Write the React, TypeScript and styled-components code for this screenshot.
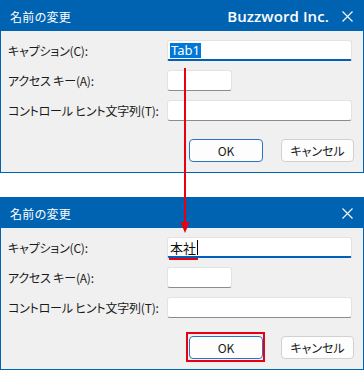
import React from "react";
import styled, { createGlobalStyle, css } from "styled-components";

const BLUE = "#0063b1";

const GlobalStyle = createGlobalStyle`
    body {
        margin: 0;
        background: #ffffff;
        font-family: "Noto Sans CJK JP", "Noto Sans", sans-serif;
        font-feature-settings: "palt";
    }
`;

const Page = styled.div`
    position: relative;
    width: 364px;
    height: 370px;
    display: flex;
    flex-direction: column;
    gap: 24px;
`;

const Dialog = styled.section`
    box-sizing: border-box;
    height: 173px;
    border: 1px solid ${BLUE};
    background: #f0f0f0;
    display: flex;
    flex-direction: column;
`;

const TitleBar = styled.header`
    height: 30px;
    flex: none;
    background: ${BLUE};
    color: #ffffff;
    display: flex;
    align-items: center;
    padding: 0 10px 0 9px;
    font-size: 12px;
`;

const Title = styled.span`
    flex: 1;
    letter-spacing: 0.3px;
`;

const Brand = styled.span`
    font-family: "Open Sans", "Noto Sans", sans-serif;
    font-size: 15px;
    font-weight: 600;
    margin-right: 13px;
    letter-spacing: 0.1px;
`;

const Form = styled.div`
    display: grid;
    grid-template-columns: 159px 185px;
    grid-auto-rows: 21px;
    row-gap: 9px;
    align-items: center;
    padding: 9px 11px 0 7px;
`;

const Label = styled.label`
    font-size: 12px;
    color: #1a1a1a;
    white-space: nowrap;
    letter-spacing: -0.2px;
`;

const Field = styled.div<{ $short?: boolean; $focused?: boolean }>`
    position: relative;
    box-sizing: border-box;
    height: 21px;
    width: ${p => (p.$short ? "65px" : "185px")};
    background: #ffffff;
    border: 1px solid #e3e3e3;
    border-bottom-color: #8c8c8c;
    border-radius: 3px;
    display: flex;
    align-items: center;
    padding-left: 2px;
    font-size: 13px;
    color: #111111;
    ${p => p.$focused && css`
        border-bottom: 2px solid #005fb8;
        border-radius: 3px 3px 2px 2px;
    `}
`;

const Selected = styled.span`
    background: #0078d7;
    color: #ffffff;
    line-height: 15px;
    padding: 0 1px;
    font-family: "Noto Sans", sans-serif;
`;

const Caret = styled.span`
    display: inline-block;
    width: 1px;
    height: 15px;
    background: #000000;
    margin-left: 1px;
`;

const Underline = styled.span`
    position: absolute;
    left: 1px;
    top: calc(100% + 2px);
    width: 29px;
    height: 2px;
    background: #e60012;
`;

const ButtonRow = styled.div`
    display: flex;
    justify-content: flex-end;
    gap: 18px;
    margin-top: 18px;
    padding-right: 9px;
`;

const Button = styled.button<{ $primary?: boolean; $marked?: boolean; $width: number }>`
    position: relative;
    box-sizing: border-box;
    width: ${p => p.$width}px;
    height: 23px;
    background: #fdfdfd;
    border: 1px solid ${p => (p.$primary ? "#2b74c4" : "#d1d1d1")};
    border-radius: 4px;
    font-family: "Noto Sans CJK JP", "Noto Sans", sans-serif;
    font-feature-settings: "palt";
    font-size: 12px;
    color: #1a1a1a;
    padding: 0;
    ${p => p.$marked && css`
        &::after {
            content: "";
            position: absolute;
            left: -4px;
            right: -3px;
            top: -5px;
            bottom: -4px;
            border: 2px solid #e60012;
        }
    `}
`;

const Overlay = styled.svg`
    position: absolute;
    left: 0;
    top: 0;
    pointer-events: none;
`;

function CloseIcon() {
    return (
        <svg width="11" height="11" viewBox="0 0 11 11">
            <path d="M0.5 0.5 L10.5 10.5 M10.5 0.5 L0.5 10.5" stroke="#ffffff" strokeWidth="1.1" fill="none" />
        </svg>
    );
}

function RenameDialog({ brand, after }: { brand?: boolean; after?: boolean }) {
    return (
        <Dialog>
            <TitleBar>
                <Title>名前の変更</Title>
                {brand && <Brand>Buzzword Inc.</Brand>}
                <CloseIcon />
            </TitleBar>
            <Form>
                <Label>キャプション(C):</Label>
                <Field $focused>
                    {after ? (
                        <>
                            本社<Caret />
                            <Underline />
                        </>
                    ) : (
                        <Selected>Tab1</Selected>
                    )}
                </Field>
                <Label>アクセス キー(A):</Label>
                <Field $short />
                <Label>コントロール ヒント文字列(T):</Label>
                <Field />
            </Form>
            <ButtonRow>
                <Button $primary $marked={after} $width={74}>OK</Button>
                <Button $width={73}>キャンセル</Button>
            </ButtonRow>
        </Dialog>
    );
}

export default function App() {
    return (
        <>
            <GlobalStyle />
            <Page>
                <RenameDialog brand />
                <RenameDialog after />
                <Overlay width="364" height="370">
                    <line x1="185" y1="68" x2="185" y2="224" stroke="#e60012" strokeWidth="2" />
                    <polygon points="180.5,222 189.5,222 185,233" fill="#e60012" />
                </Overlay>
            </Page>
        </>
    );
}
